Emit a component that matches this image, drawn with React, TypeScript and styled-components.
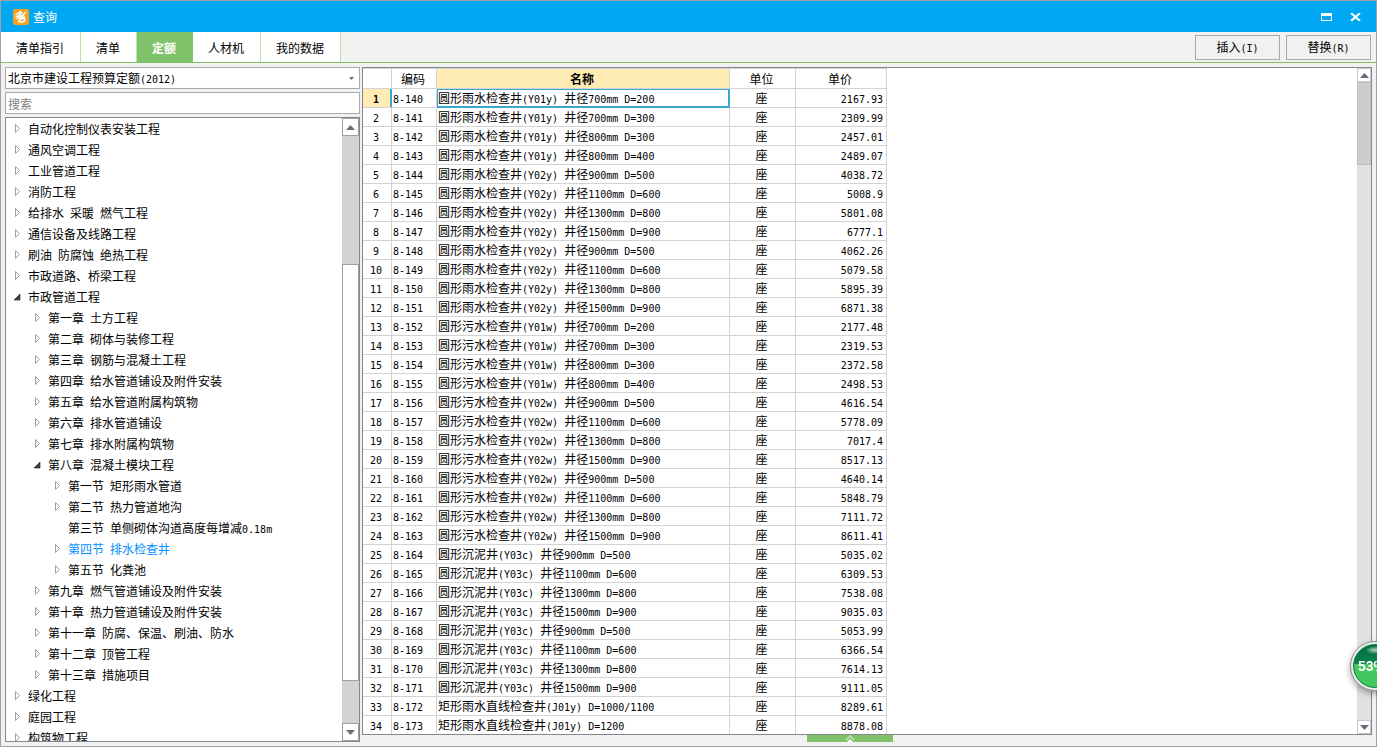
import React from "react";
import styled, { createGlobalStyle, css } from "styled-components";

const GlobalStyle = createGlobalStyle`
  * { box-sizing: border-box; }
  html, body { margin: 0; }
  body, button, input, select {
    font-family: "Noto Sans CJK SC", sans-serif;
    font-size: 12px;
    line-height: 18px;
    color: #000;
  }
  button, input, select { margin: 0; padding: 0; border-radius: 0; appearance: none; }
`;

const Latin = styled.span`
  font-family: "DejaVu Sans Mono", monospace;
  font-size: 10px;
  line-height: 12px;
  white-space: pre;
`;

function Mixed({ text }: { text: string }) {
  return (
    <>
      {text.split(/([\x20-\x7e]+)/).map((part, i) =>
        i % 2 ? <Latin key={i}>{part}</Latin> : part
      )}
    </>
  );
}

const Window = styled.div`
  display: flex;
  flex-direction: column;
  height: 100vh;
  overflow: hidden;
  background: #f1f1f1;
  border: 1px solid #a0a0a0;
`;

const TitleBar = styled.header`
  display: flex;
  flex: none;
  align-items: center;
  height: 31px;
  padding: 0 8px 0 12px;
  gap: 4px;
  background: #00a8f3;
  color: #fff;
`;

const Title = styled.h1`
  flex: 1;
  margin: 0;
  font-size: 12px;
  font-weight: 400;
`;

const WindowButton = styled.button`
  display: flex;
  align-items: center;
  justify-content: center;
  width: 25px;
  height: 24px;
  border: 0;
  background: none;
`;

const Toolbar = styled.div`
  display: flex;
  flex: none;
  justify-content: space-between;
  height: 31px;
  border-bottom: 1px solid #80c269;
`;

const Tabs = styled.nav`
  display: flex;
`;

const Tab = styled.button<{ $active?: boolean }>`
  padding: 2px 16px 0 15px;
  border: 0;
  border-right: 1px solid #b5e6a2;
  background: #fff;
  ${(p) =>
    p.$active &&
    css`
      border-color: #80c269;
      background: #80c269;
      color: #fff;
      font-weight: 700;
    `}
`;

const Actions = styled.div`
  display: flex;
  align-items: center;
  gap: 6px;
  padding-right: 5px;
`;

const ActionButton = styled.button`
  width: 85px;
  height: 25px;
  border: 1px solid #a9a9a9;
  background: #f1f1f1;
`;

const Body = styled.main`
  display: flex;
  flex: 1;
  min-height: 0;
  gap: 2px;
  padding: 4px;
`;

const Sidebar = styled.aside`
  display: flex;
  flex: none;
  flex-direction: column;
  gap: 3px;
  width: 355px;
`;

const SelectBox = styled.div`
  display: grid;
  flex: none;
  height: 22px;
  border: 1px solid #a9a9a9;
  background: #fff;
  & > * { grid-area: 1 / 1; }
`;

const SelectText = styled.span`
  padding-left: 2px;
  line-height: 20px;
  pointer-events: none;
`;

const Select = styled.select`
  width: 100%;
  border: 0;
  background: transparent;
  color: transparent;
`;

const SelectArrow = styled.svg`
  align-self: center;
  justify-self: end;
  margin-right: 5px;
  pointer-events: none;
`;

const Search = styled.input`
  flex: none;
  height: 22px;
  padding: 0 2px;
  border: 1px solid #a9a9a9;
  background: #fff;
  &::placeholder { color: #808080; opacity: 1; }
`;

const Panel = styled.div`
  display: flex;
  flex: 1;
  min-height: 0;
  min-width: 0;
  border: 1px solid #828790;
  background: #fff;
`;

const TreeList = styled.ul`
  flex: 1;
  min-width: 0;
  margin: 0;
  padding: 0;
  overflow: hidden;
  list-style: none;
`;

const TreeItem = styled.li<{ $level: number; $selected?: boolean }>`
  display: flex;
  align-items: center;
  gap: 5px;
  height: 21px;
  padding-left: ${(p) => 6 + p.$level * 20}px;
  color: ${(p) => (p.$selected ? "#0090ff" : "#000")};
  white-space: nowrap;
`;

const ScrollBar = styled.div<{ $slim?: boolean }>`
  display: flex;
  flex: none;
  flex-direction: column;
  width: ${(p) => (p.$slim ? 14 : 17)}px;
  background: ${(p) => (p.$slim ? "#e1e1e1" : "#d3d3d3")};
`;

const ScrollButton = styled.button<{ $slim?: boolean }>`
  display: flex;
  flex: none;
  align-items: center;
  justify-content: center;
  height: ${(p) => (p.$slim ? 14 : 18)}px;
  border: 1px solid ${(p) => (p.$slim ? "#c8c8c8" : "#a0a0a0")};
  background: #fff;
`;

const Track = styled.div`
  display: flex;
  flex: 1;
  flex-direction: column;
`;

const Space = styled.div<{ $grow: number }>`
  flex: ${(p) => p.$grow} 1 0;
`;

const Thumb = styled.div<{ $grow: number; $slim?: boolean }>`
  flex: ${(p) => p.$grow} 1 0;
  border: 1px solid ${(p) => (p.$slim ? "#c0c0c0" : "#a0a0a0")};
  background: ${(p) => (p.$slim ? "#cdcdcd" : "#fff")};
`;

const Results = styled.section`
  display: flex;
  flex: 1;
  flex-direction: column;
  min-width: 0;
`;

const TableArea = styled.div`
  flex: 1;
  min-width: 0;
  overflow: hidden;
`;

const Table = styled.table`
  width: 524px;
  border-collapse: separate;
  border-spacing: 0;
  table-layout: fixed;
  border-top: 1px solid #d3d3d3;
`;

const HeadCell = styled.th<{ $current?: boolean }>`
  height: 20px;
  padding: 0 2px 0 0;
  border-right: 1px solid #d3d3d3;
  border-bottom: 1px solid #d3d3d3;
  background: ${(p) => (p.$current ? "#ffecb5" : "#fff")};
  font-weight: ${(p) => (p.$current ? 700 : 400)};
`;

const RowHead = styled.th<{ $current?: boolean }>`
  height: 19px;
  padding: 0 2px 0 0;
  border-right: 1px solid #d3d3d3;
  border-bottom: 1px solid #d3d3d3;
  background: #fff;
  font-weight: 400;
  ${(p) =>
    p.$current &&
    css`
      border-right-color: #3ba6d0;
      background: #ffecb5;
      box-shadow: inset -1px 0 0 #3ba6d0;
      font-weight: 700;
    `}
`;

const Cell = styled.td<{ $align?: string; $current?: boolean }>`
  height: 19px;
  padding: 0 3px 0 1px;
  border-right: 1px solid #d3d3d3;
  border-bottom: 1px solid #d3d3d3;
  line-height: 18px;
  text-align: ${(p) => p.$align || "left"};
  white-space: nowrap;
  ${(p) =>
    p.$current &&
    css`
      border-color: #3ba6d0;
      box-shadow: inset 0 0 0 1px #3ba6d0;
    `}
`;

const Footer = styled.div`
  display: flex;
  flex: none;
  justify-content: center;
  height: 7px;
  padding-right: 34px;
`;

const ExpandButton = styled.button`
  display: flex;
  align-items: center;
  justify-content: center;
  width: 86px;
  height: 7px;
  border: 0;
  background: #80c269;
`;

const Ball = styled.div`
  position: fixed;
  right: -23px;
  bottom: 56px;
  width: 50px;
  height: 50px;
  padding: 2px;
  border: 1px solid #8d8d8d;
  border-radius: 50%;
  background: #e9f0ec;
  box-shadow: 0 3px 6px rgba(0, 0, 0, 0.35);
`;

const BallFace = styled.div`
  height: 100%;
  padding-left: 4px;
  overflow: hidden;
  border: 1px solid #078048;
  border-radius: 50%;
  background:
    radial-gradient(ellipse 10px 4px at 50% 5px, rgba(255, 255, 255, 0.7), transparent),
    linear-gradient(#04693f 0, #0a8450 46%, #43c860 46% 100%);
  color: #fff;
  font-family: "Liberation Sans", sans-serif;
  font-size: 14px;
  font-weight: 700;
  line-height: 42px;
  white-space: nowrap;
`;

function Arrow({ down }: { down?: boolean }) {
  return (
    <svg width="9" height="5" viewBox="0 0 9 5">
      <path d={down ? "M0 0h9L4.500 5z" : "M0 5h9L4.500 0z"} fill="#696c7a" />
    </svg>
  );
}

function TreeMark({ state }: { state: string }) {
  return (
    <svg width="11" height="12" viewBox="0 0 11 12">
      {state === "closed" && (
        <path d="M3.500 1.500v8l4-4z" fill="#fff" stroke="#a0a0a0" />
      )}
      {state === "open" && <path d="M8 3v6H2z" fill="#404040" stroke="#202020" strokeWidth=".6" />}
    </svg>
  );
}

const tree: [number, string, string][] = [
  [0, "closed", "自动化控制仪表安装工程"],
  [0, "closed", "通风空调工程"],
  [0, "closed", "工业管道工程"],
  [0, "closed", "消防工程"],
  [0, "closed", "给排水 采暖 燃气工程"],
  [0, "closed", "通信设备及线路工程"],
  [0, "closed", "刷油 防腐蚀 绝热工程"],
  [0, "closed", "市政道路、桥梁工程"],
  [0, "open", "市政管道工程"],
  [1, "closed", "第一章 土方工程"],
  [1, "closed", "第二章 砌体与装修工程"],
  [1, "closed", "第三章 钢筋与混凝土工程"],
  [1, "closed", "第四章 给水管道铺设及附件安装"],
  [1, "closed", "第五章 给水管道附属构筑物"],
  [1, "closed", "第六章 排水管道铺设"],
  [1, "closed", "第七章 排水附属构筑物"],
  [1, "open", "第八章 混凝土模块工程"],
  [2, "closed", "第一节 矩形雨水管道"],
  [2, "closed", "第二节 热力管道地沟"],
  [2, "leaf", "第三节 单侧砌体沟道高度每增减0.18m"],
  [2, "closed", "第四节 排水检查井"],
  [2, "closed", "第五节 化粪池"],
  [1, "closed", "第九章 燃气管道铺设及附件安装"],
  [1, "closed", "第十章 热力管道铺设及附件安装"],
  [1, "closed", "第十一章 防腐、保温、刷油、防水"],
  [1, "closed", "第十二章 顶管工程"],
  [1, "closed", "第十三章 措施项目"],
  [0, "closed", "绿化工程"],
  [0, "closed", "庭园工程"],
  [0, "closed", "构筑物工程"],
];

const rain = "圆形雨水检查井";
const sewage = "圆形污水检查井";
const silt = "圆形沉泥井";

const rows: [string, string][] = [
  [`${rain}(Y01y) 井径700mm D=200`, "2167.93"],
  [`${rain}(Y01y) 井径700mm D=300`, "2309.99"],
  [`${rain}(Y01y) 井径800mm D=300`, "2457.01"],
  [`${rain}(Y01y) 井径800mm D=400`, "2489.07"],
  [`${rain}(Y02y) 井径900mm D=500`, "4038.72"],
  [`${rain}(Y02y) 井径1100mm D=600`, "5008.9"],
  [`${rain}(Y02y) 井径1300mm D=800`, "5801.08"],
  [`${rain}(Y02y) 井径1500mm D=900`, "6777.1"],
  [`${rain}(Y02y) 井径900mm D=500`, "4062.26"],
  [`${rain}(Y02y) 井径1100mm D=600`, "5079.58"],
  [`${rain}(Y02y) 井径1300mm D=800`, "5895.39"],
  [`${rain}(Y02y) 井径1500mm D=900`, "6871.38"],
  [`${sewage}(Y01w) 井径700mm D=200`, "2177.48"],
  [`${sewage}(Y01w) 井径700mm D=300`, "2319.53"],
  [`${sewage}(Y01w) 井径800mm D=300`, "2372.58"],
  [`${sewage}(Y01w) 井径800mm D=400`, "2498.53"],
  [`${sewage}(Y02w) 井径900mm D=500`, "4616.54"],
  [`${sewage}(Y02w) 井径1100mm D=600`, "5778.09"],
  [`${sewage}(Y02w) 井径1300mm D=800`, "7017.4"],
  [`${sewage}(Y02w) 井径1500mm D=900`, "8517.13"],
  [`${sewage}(Y02w) 井径900mm D=500`, "4640.14"],
  [`${sewage}(Y02w) 井径1100mm D=600`, "5848.79"],
  [`${sewage}(Y02w) 井径1300mm D=800`, "7111.72"],
  [`${sewage}(Y02w) 井径1500mm D=900`, "8611.41"],
  [`${silt}(Y03c) 井径900mm D=500`, "5035.02"],
  [`${silt}(Y03c) 井径1100mm D=600`, "6309.53"],
  [`${silt}(Y03c) 井径1300mm D=800`, "7538.08"],
  [`${silt}(Y03c) 井径1500mm D=900`, "9035.03"],
  [`${silt}(Y03c) 井径900mm D=500`, "5053.99"],
  [`${silt}(Y03c) 井径1100mm D=600`, "6366.54"],
  [`${silt}(Y03c) 井径1300mm D=800`, "7614.13"],
  [`${silt}(Y03c) 井径1500mm D=900`, "9111.05"],
  ["矩形雨水直线检查井(J01y) D=1000/1100", "8289.61"],
  ["矩形雨水直线检查井(J01y) D=1200", "8878.08"],
];

export default function App() {
  return (
    <Window>
      <GlobalStyle />
      <TitleBar>
        <svg width="16" height="16" viewBox="0 0 16 16">
          <rect width="16" height="16" rx="2.500" fill="#f9a01f" />
          <path
            d="M2.500 6l5-3.500 1 1.500-4.500 3.500 4-.5M7.500 8l5.500-5M3.500 9.500c3 .5 5-2 8-4M5 12c1 2 7 1 7-1.500 0-2-4-1.500-6.500 2M7 9.500l5-1.500"
            fill="none"
            stroke="#fff"
            strokeWidth="1.500"
          />
        </svg>
        <Title>查询</Title>
        <WindowButton aria-label="最大化">
          <svg width="11" height="8" viewBox="0 0 11 8">
            <path d="M0 0h11v8H0zM1 3v4h9V3z" fill="#fff" fillRule="evenodd" />
          </svg>
        </WindowButton>
        <WindowButton aria-label="关闭">
          <svg width="11" height="8" viewBox="0 0 11 8">
            <path d="M1 0l9 8M10 0L1 8" stroke="#fff" strokeWidth="2" />
          </svg>
        </WindowButton>
      </TitleBar>
      <Toolbar>
        <Tabs>
          <Tab>清单指引</Tab>
          <Tab>清单</Tab>
          <Tab $active>定额</Tab>
          <Tab>人材机</Tab>
          <Tab>我的数据</Tab>
        </Tabs>
        <Actions>
          <ActionButton><Mixed text="插入(I)" /></ActionButton>
          <ActionButton><Mixed text="替换(R)" /></ActionButton>
        </Actions>
      </Toolbar>
      <Body>
        <Sidebar>
          <SelectBox>
            <Select aria-label="定额库">
              <option>北京市建设工程预算定额(2012)</option>
            </Select>
            <SelectText aria-hidden="true"><Mixed text="北京市建设工程预算定额(2012)" /></SelectText>
            <SelectArrow width="5" height="3" viewBox="0 0 5 3">
              <path d="M0 0h5L2.500 3z" fill="#696c7a" />
            </SelectArrow>
          </SelectBox>
          <Search aria-label="搜索" placeholder="搜索" />
          <Panel>
            <TreeList>
              {tree.map(([level, state, label]) => (
                <TreeItem key={label} $level={level} $selected={label === "第四节 排水检查井"}>
                  <TreeMark state={state} />
                  <span><Mixed text={label} /></span>
                </TreeItem>
              ))}
            </TreeList>
            <ScrollBar>
              <ScrollButton aria-label="向上滚动"><Arrow /></ScrollButton>
              <Track>
                <Space $grow={129} />
                <Thumb $grow={418} />
                <Space $grow={42} />
              </Track>
              <ScrollButton aria-label="向下滚动"><Arrow down /></ScrollButton>
            </ScrollBar>
          </Panel>
        </Sidebar>
        <Results>
          <Panel>
            <TableArea>
              <Table>
                <colgroup>
                  <col width="29" />
                  <col width="45" />
                  <col width="293" />
                  <col width="66" />
                  <col width="91" />
                </colgroup>
                <thead>
                  <tr>
                    <HeadCell aria-label="序号" />
                    <HeadCell>编码</HeadCell>
                    <HeadCell $current>名称</HeadCell>
                    <HeadCell>单位</HeadCell>
                    <HeadCell>单价</HeadCell>
                  </tr>
                </thead>
                <tbody>
                  {rows.map(([name, price], i) => (
                    <tr key={i}>
                      <RowHead scope="row" $current={i === 0}><Mixed text={String(i + 1)} /></RowHead>
                      <Cell><Mixed text={`8-${140 + i}`} /></Cell>
                      <Cell $current={i === 0}><Mixed text={name} /></Cell>
                      <Cell $align="center">座</Cell>
                      <Cell $align="right"><Mixed text={price} /></Cell>
                    </tr>
                  ))}
                </tbody>
              </Table>
            </TableArea>
            <ScrollBar $slim>
              <ScrollButton $slim aria-label="向上滚动"><Arrow /></ScrollButton>
              <Track>
                <Thumb $slim $grow={83} />
                <Space $grow={570} />
              </Track>
              <ScrollButton $slim aria-label="向下滚动"><Arrow down /></ScrollButton>
            </ScrollBar>
          </Panel>
          <Footer>
            <ExpandButton aria-label="展开">
              <svg width="10" height="7" viewBox="0 0 10 7">
                <path d="M1 5l4-4 4 4" fill="none" stroke="#c4e5b8" strokeWidth="1.500" />
                <path d="M2 7l3-3 3 3z" fill="#fff" />
              </svg>
            </ExpandButton>
          </Footer>
        </Results>
      </Body>
      <Ball>
        <BallFace>53%</BallFace>
      </Ball>
    </Window>
  );
}
